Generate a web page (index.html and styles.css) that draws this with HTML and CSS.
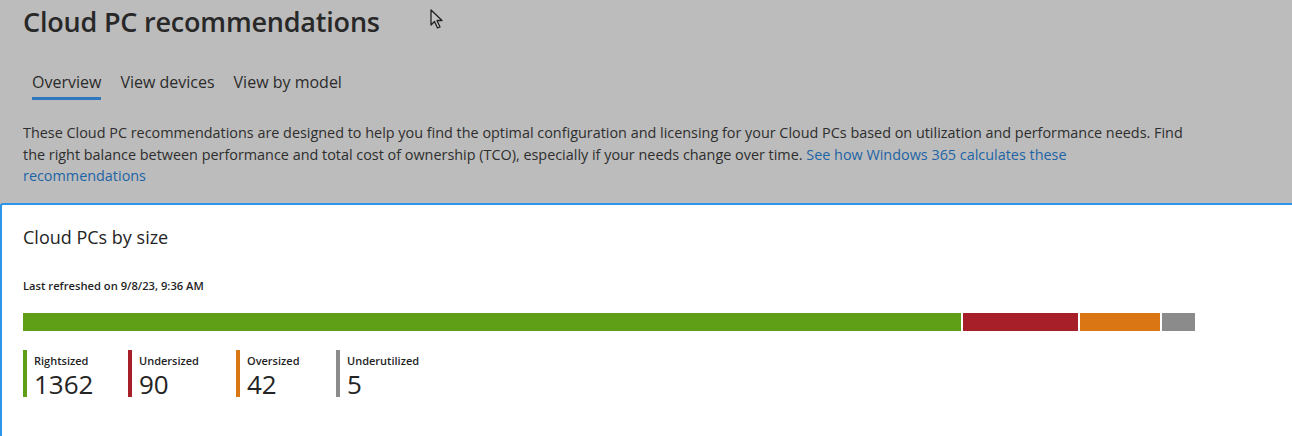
FILE: index.html
```html
<!DOCTYPE html>
<html>
<head>
<meta charset="utf-8">
<link rel="stylesheet" href="styles.css">
</head>
<body>
<div class="page">
  <header class="header">
    <h1 class="title">Cloud PC recommendations</h1>
    <nav class="tabs">
      <span class="tab active">Overview</span>
      <span class="tab">View devices</span>
      <span class="tab">View by model</span>
    </nav>
    <p class="intro">These Cloud PC recommendations are designed to help you find the optimal configuration and licensing for your Cloud PCs based on utilization and performance needs. Find<br>the right balance between performance and total cost of ownership (TCO), especially if your needs change over time. <a class="link">See how Windows 365 calculates these<br>recommendations</a></p>
  </header>
  <section class="card">
    <h2 class="card-title">Cloud PCs by size</h2>
    <div class="refreshed">Last refreshed on 9/8/23, 9:36 AM</div>
    <div class="bar">
      <div class="seg green" style="width:938px"></div>
      <div class="seg red" style="width:115px"></div>
      <div class="seg orange" style="width:80px"></div>
      <div class="seg grey" style="width:33px"></div>
    </div>
    <div class="legend">
      <div class="item i1"><span class="swatch green"></span><div class="txt"><div class="lbl">Rightsized</div><div class="num">1362</div></div></div>
      <div class="item i2"><span class="swatch red"></span><div class="txt"><div class="lbl">Undersized</div><div class="num">90</div></div></div>
      <div class="item i3"><span class="swatch orange"></span><div class="txt"><div class="lbl">Oversized</div><div class="num">42</div></div></div>
      <div class="item i4"><span class="swatch grey"></span><div class="txt"><div class="lbl">Underutilized</div><div class="num">5</div></div></div>
    </div>
  </section>
  <svg class="cursor" width="14" height="22" viewBox="0 0 14 22"><path d="M1 1 L1 16 L4.5 12.5 L7.5 19 L10 18 L7 11.5 L12 11.5 Z" fill="#c4c4c4" stroke="#222" stroke-width="1.3" stroke-linejoin="round"/></svg>
</div>
</body>
</html>
```
FILE: styles.css
```css
html, body { margin: 0; padding: 0; }
body {
  background: #bcbcbc;
  font-family: "Open Sans", "Noto Sans", sans-serif;
  color: #2b2b2b;
  width: 1292px;
  height: 436px;
  overflow: hidden;
}
.page { position: relative; height: 436px; overflow: hidden; }
.header { padding: 0 0 0 23px; }
.title {
  margin: 0;
  padding-top: 4px;
  font-size: 27px;
  font-weight: 600;
  line-height: 36px;
  color: #282828;
  letter-spacing: -0.2px;
}
.tabs {
  display: flex;
  gap: 19px;
  margin-top: 32px;
  padding-left: 9px;
}
.tab {
  font-size: 16px;
  line-height: 20px;
  padding-bottom: 5px;
  color: #2b2b2b;
  border-bottom: 3px solid transparent;
}
.tab.active { border-bottom-color: #2f78c0; font-weight: 500; }
.intro {
  margin: 22px 0 0 0;
  width: 1240px;
  font-size: 14.4px;
  line-height: 21.5px;
  color: #2e2e2e;
}
.link { color: #1c64a6; }
.card {
  margin-top: 16px;
  background: #fff;
  border-top: 2px solid #2b95e9;
  border-left: 2px solid #2b95e9;
  border-top-left-radius: 3px;
  height: 232px;
  padding-left: 21px;
}
.card-title {
  margin: 0;
  padding-top: 19px;
  font-size: 18px;
  font-weight: 500;
  line-height: 26px;
  color: #242424;
}
.refreshed {
  margin-top: 28px;
  font-size: 11.2px;
  font-weight: 600;
  line-height: 16px;
  color: #1f1f1f;
}
.bar {
  display: flex;
  gap: 2px;
  margin-top: 19px;
  height: 18px;
}
.seg { height: 18px; }
.green { background: #5e9f17; }
.red { background: #a71f29; }
.orange { background: #da7714; }
.grey { background: #8b8b8b; }
.legend {
  display: flex;
  margin-top: 19px;
}
.item { display: flex; gap: 7px; }
.i1 { width: 105px; }
.i2 { width: 108px; }
.i3 { width: 100px; }
.swatch { width: 4px; height: 47px; display: block; }
.txt { display: flex; flex-direction: column; }
.lbl {
  font-size: 11px;
  font-weight: 600;
  line-height: 14px;
  margin-top: 4px;
  color: #1f1f1f;
}
.num {
  font-size: 26px;
  line-height: 26px;
  color: #242424;
  margin-top: 3px;
}
.cursor { position: absolute; left: 430px; top: 9px; }
```
